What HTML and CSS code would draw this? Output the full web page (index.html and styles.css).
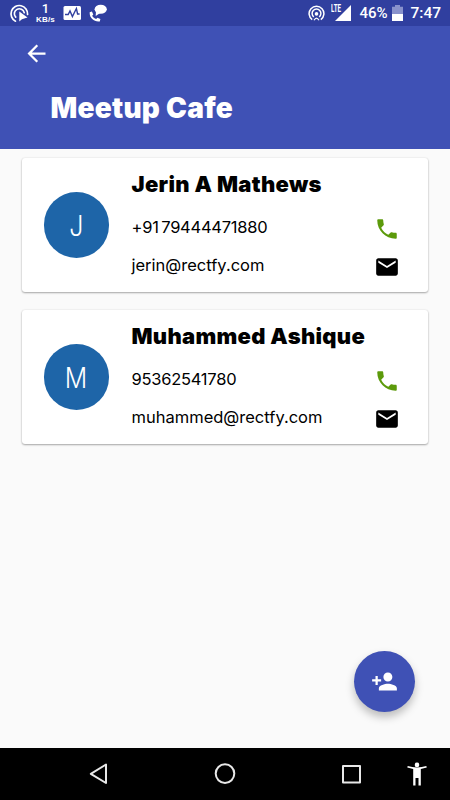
FILE: index.html
```html
<!DOCTYPE html>
<html lang="en">
<head>
<meta charset="utf-8">
<title>Meetup Cafe</title>
<link rel="stylesheet" href="styles.css">
</head>
<body>
<svg class="defs" width="0" height="0">
  <symbol id="phone" viewBox="0 0 24 24"><path d="M6.62 10.79c1.44 2.83 3.76 5.14 6.59 6.59l2.2-2.2c.27-.27.67-.36 1.02-.24 1.12.37 2.33.57 3.57.57.55 0 1 .45 1 1V20c0 .55-.45 1-1 1-9.39 0-17-7.61-17-17 0-.55.45-1 1-1h3.5c.55 0 1 .45 1 1 0 1.25.2 2.45.57 3.57.11.35.03.74-.25 1.02l-2.2 2.2z"/></symbol>
  <symbol id="mail" viewBox="0 0 24 24"><path d="M20 4H4c-1.1 0-1.99.9-1.99 2L2 18c0 1.1.9 2 2 2h16c1.1 0 2-.9 2-2V6c0-1.1-.9-2-2-2zm0 4l-8 5-8-5V6l8 5 8-5v2z"/></symbol>
</svg>
<div class="screen">
  <div class="status">
    <svg class="status-left" width="92" height="26" viewBox="0 0 92 26">
      <g fill="none" stroke="#fff" stroke-width="1.7" stroke-linecap="round">
        <path d="M15.5 21.2A8.3 8.3 0 1 1 27.6 14.5"/>
        <path d="M15.7 17.2A5 5 0 1 1 24.2 12.6"/>
      </g>
      <path d="M19.3 11.5v10l2.6-2.2 5.6-1.7z" fill="#fff"/>
      <rect x="63.5" y="6" width="17.5" height="14" rx="1.5" fill="#fff"/>
      <path d="M65 14.5h3.2l1.8-3.5 2.4 5.5 4-8 1.2 5.5h2" fill="none" stroke="#303f9f" stroke-width="1.4"/>
    </svg>
    <div class="rate"><span class="rate-num">1</span><span class="rate-unit">KB/s</span></div>
    <svg class="call-chat" width="18" height="18" viewBox="0 0 18 18" fill="#fff">
      <ellipse cx="11.7" cy="5.2" rx="6.1" ry="4.5"/><path d="M7 7l-.3 5 4.5-3z"/>
      <path d="M.7 8.3l2.2-.8 1.4 3-1.1 1.2c.9 1.7 2.3 2.8 4 3.2l1.2-1.1 3 1.1-.6 2.5C5.300 18.200.2 14.300.7 8.300z"/>
    </svg>
    <svg class="cast" width="17" height="17" viewBox="0 0 17 17" fill="none" stroke="#fff" stroke-width="1.5">
      <path d="M4.200 14.600A7.400 7.400 0 1 1 12.800 14.600"/><path d="M5.800 11.900A4.400 4.400 0 1 1 11.200 11.900"/><circle cx="8.500" cy="8.900" r="1.800" fill="#fff" stroke="none"/><path d="M6 15.300q2.500-4.500 5 0" stroke-width="1.200"/>
    </svg>
    <span class="lte">LTE</span>
    <svg class="signal" width="16" height="16" viewBox="0 0 16 16"><path d="M0 16L16 0v16z" fill="#fff"/></svg>
    <span class="percent">46%</span>
    <svg class="battery" width="11" height="16" viewBox="0 0 11 16"><path d="M0 1.800h3V0h5v1.800h3V16H0z" fill="#8992cc"/><path d="M0 9h11v7H0z" fill="#fff"/></svg>
    <span class="clock">7:47</span>
  </div>

  <header class="header">
    <svg class="back" width="27" height="27" viewBox="0 0 24 24"><path fill="#fff" d="M20 11H7.830l5.590-5.590L12 4l-8 8 8 8 1.410-1.410L7.830 13H20v-2z"/></svg>
    <h1 class="title">Meetup Cafe</h1>
  </header>

  <main class="contacts">
    <article class="card">
      <div class="avatar"><span>J</span></div>
      <div class="details">
        <h2 class="name">Jerin A Mathews</h2>
        <div class="row"><span class="phone-text">+91 79444471880</span><svg class="icon green"><use href="#phone"/></svg></div>
        <div class="row"><span class="mail-text">jerin@rectfy.com</span><svg class="icon"><use href="#mail"/></svg></div>
      </div>
    </article>
    <article class="card">
      <div class="avatar"><span>M</span></div>
      <div class="details">
        <h2 class="name">Muhammed Ashique</h2>
        <div class="row"><span class="phone-text">95362541780</span><svg class="icon green"><use href="#phone"/></svg></div>
        <div class="row"><span class="mail-text">muhammed@rectfy.com</span><svg class="icon"><use href="#mail"/></svg></div>
      </div>
    </article>
  </main>

  <div class="fab">
    <svg width="27" height="27" viewBox="0 0 24 24"><path fill="#fff" d="M15 12c2.210 0 4-1.790 4-4s-1.790-4-4-4-4 1.790-4 4 1.790 4 4 4zm-9-2V7H4v3H1v2h3v3h2v-3h3v-2H6zm9 4c-2.670 0-8 1.340-8 4v2h16v-2c0-2.660-5.330-4-8-4z"/></svg>
  </div>

  <nav class="navbar">
    <svg width="450" height="52" viewBox="0 0 450 52">
      <g fill="none" stroke="#e8e8e8" stroke-width="2" stroke-linejoin="round">
        <path d="M106 16.500v18.500L90.800 25.800z"/>
        <circle cx="225" cy="25.600" r="9.300"/>
        <path d="M343 18h17v16.500h-17z"/>
      </g>
      <g fill="#fff"><circle cx="417" cy="16.900" r="2.300"/><path d="M407.300 19.500l.4-1.500c6 1.900 12.600 1.900 18.600 0l.5 1.500-6 1.500v16.500h-2.300v-7.500h-3v7.500h-2.300V21z"/></g>
    </svg>
  </nav>
</div>
</body>
</html>
```
FILE: styles.css
```css
* { box-sizing: border-box; }
body { margin: 0; font-family: Inter, "Liberation Sans", sans-serif; }
.defs { position: absolute; }
.screen {
  position: relative;
  display: flex;
  flex-direction: column;
  width: 450px;
  height: 800px;
  overflow: hidden;
  background: #fafafa;
}
.status {
  position: relative;
  display: flex;
  height: 26px;
  flex: none;
  color: #fff;
  background: #303f9f;
  font-family: Roboto, sans-serif;
}
.status svg { flex: none; }
.rate {
  position: absolute;
  left: 34px;
  top: 3px;
  width: 23px;
  display: flex;
  flex-direction: column;
  align-items: center;
}
.rate-num { font-size: 13px; line-height: 12px; font-weight: 500; }
.rate-unit { font: bold 8px/9px "Liberation Sans", sans-serif; letter-spacing: 0.2px; }
.call-chat { margin: 4px 0 0 -3px; }
.cast { margin: 5px 0 0 200.500px; }
.lte { width: 10px; margin: 4px 0 0 6px; font: 700 10px/10px Roboto, sans-serif; transform: scaleX(0.62); transform-origin: 0 0; }
.signal { margin: 5px 0 0 -6px; }
.percent { width: 29px; margin-left: 9px; font-size: 15px; line-height: 27px; font-weight: 500; white-space: nowrap; }
.battery { margin: 5px 0 0 3.500px; }
.clock { margin-left: 7.500px; font-size: 15.500px; line-height: 27px; font-weight: 500; }
.header { height: 123px; flex: none; background: #3f51b5; }
.back { display: block; margin: 0 0 0 23px; transform: translateY(14px); }
.title {
  margin: 38px 0 0 50.500px;
  font-size: 28px;
  line-height: 35px;
  font-weight: 900;
  letter-spacing: 0.250px;
  color: #fff;
}
.contacts { display: flex; flex-direction: column; gap: 17.500px; padding: 8.500px 22px; }
.card {
  display: flex;
  align-items: center;
  height: 134.500px;
  padding: 0 28px 0 21.500px;
  border-radius: 3px;
  background: #fff;
  box-shadow: 0 1px 2px rgba(0, 0, 0, 0.32), 0 0 2px rgba(0, 0, 0, 0.1);
}
.avatar {
  flex: none;
  width: 65.500px;
  height: 65.500px;
  border-radius: 50%;
  background: #1e65a8;
  color: #fff;
  font-size: 29px;
  line-height: 68px;
  font-weight: 300;
  text-align: center;
}
.avatar span { display: inline-block; transform: scaleX(0.86); }
.details { flex: 1; align-self: stretch; margin-left: 22.500px; padding-top: 12px; }
.name { margin: 0 0 14px; font-size: 22px; line-height: 28px; font-weight: 900; letter-spacing: 0.300px; white-space: nowrap; }
.row { display: flex; align-items: center; justify-content: space-between; height: 38px; font-size: 16.500px; line-height: 20px; }
.row:nth-child(2) { margin-top: -2px; }
.row span { transform: translateY(-2px); }
.phone-text { letter-spacing: -0.250px; word-spacing: -1.800px; }
.icon { width: 26px; height: 26px; fill: #000; }
.green { fill: #5c9a0b; }
.fab {
  position: absolute;
  left: 353.500px;
  top: 651px;
  display: flex;
  align-items: center;
  justify-content: center;
  width: 61px;
  height: 61px;
  border-radius: 50%;
  background: #3f51b5;
  box-shadow: 0 5px 8px rgba(0, 0, 0, 0.25);
}
.navbar { height: 52px; margin-top: auto; background: #000; }
.navbar svg { display: block; }
```
